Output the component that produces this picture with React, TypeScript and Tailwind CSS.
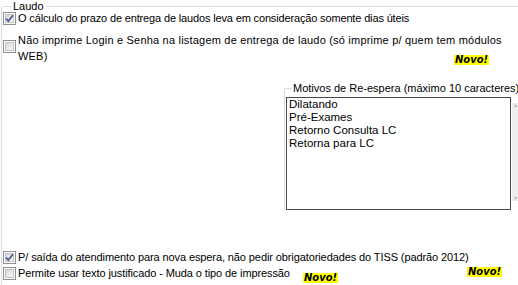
import React from "react";

function Check({ checked }: { checked?: boolean }) {
  return (
    <svg width="13" height="13" viewBox="0 0 13 13" className="shrink-0">
      <defs>
        <linearGradient id="cbg" x1="0" y1="0" x2="1" y2="1">
          <stop offset="0" stopColor="#d6d6d6" />
          <stop offset="1" stopColor="#fbfbfb" />
        </linearGradient>
      </defs>
      <rect x="0.5" y="0.5" width="12" height="12" fill="#fff" stroke="#8f8f8f" />
      <rect x="2.5" y="2.5" width="8" height="8" fill="url(#cbg)" stroke="#c4c4c4" />
      {checked && (
        <path d="M3 6.5 L5.3 9 L10 3.2" fill="none" stroke="#4a5f97" strokeWidth="1.8" />
      )}
    </svg>
  );
}

function Novo() {
  return (
    <span className="block h-[10px] w-[35px] bg-[#ffff00] text-center text-[10px] font-bold italic leading-[10px] text-black [font-family:'DejaVu_Sans',sans-serif]">
      Novo!
    </span>
  );
}

export default function App() {
  return (
    <div className="relative h-[285px] w-[518px] overflow-hidden bg-white text-[11px] leading-[13px] text-black [font-family:'Liberation_Sans',Arial,sans-serif]">
      <fieldset className="ml-[1px] h-[300px] w-[517px] rounded-[2px] border border-[#d5dfe5] px-[1px] pt-0">
        <legend className="ml-[8px] px-[2px] text-[11px] leading-[12px]">Laudo</legend>

        <label className="flex items-center gap-[2px] whitespace-nowrap">
          <Check checked />
          <span className="tracking-[-0.15px]">O cálculo do prazo de entrega de laudos leva em consideração somente dias úteis</span>
        </label>

        <div className="relative mt-[7px] flex items-start gap-[2px]">
          <div className="pt-[8px]">
            <Check />
          </div>
          <div className="whitespace-nowrap text-[11px] leading-[16px] tracking-[0.2px]">
            Não imprime Login e Senha na listagem de entrega de laudo (só imprime p/ quem tem módulos
            <br />
            WEB)
          </div>
          <span className="absolute left-[451px] top-[23px]">
            <Novo />
          </span>
        </div>

        <fieldset className="ml-[281px] mt-[18px] w-[240px] rounded-tl-[2px] border border-r-0 border-b-0 border-[#d5dfe5] pl-[1px] pr-0 pb-0">
          <legend className="ml-[6px] whitespace-nowrap px-[1px] text-[11px] leading-[13px]">
            Motivos de Re-espera (máximo 10 caracteres)
          </legend>
          <div className="mt-[2px] flex">
            <div className="h-[113px] w-[225px] border border-[#4a4a4a] px-[2px] text-[11.5px] leading-[13px]">
              <div>Dilatando</div>
              <div>Pré-Exames</div>
              <div>Retorno Consulta LC</div>
              <div>Retorna para LC</div>
            </div>
            <div className="ml-[1px] mt-[6px] flex h-[98px] w-[7px] flex-col items-center justify-between bg-[#eeeeee] py-[1px]">
              <svg width="3" height="3" viewBox="0 0 3 3">
                <path d="M0 3 L1.5 0 L3 3Z" fill="#b5b5b5" />
              </svg>
              <svg width="3" height="3" viewBox="0 0 3 3">
                <path d="M0 0 L1.5 3 L3 0Z" fill="#b5b5b5" />
              </svg>
            </div>
          </div>
        </fieldset>

        <div className="mt-[41px] flex items-center gap-[2px] whitespace-nowrap">
          <Check checked />
          <span className="tracking-[-0.1px]">P/ saída do atendimento para nova espera, não pedir obrigatoriedades do TISS (padrão 2012)</span>
        </div>
        <div className="relative mt-[3px] flex items-center gap-[2px] whitespace-nowrap">
          <Check />
          <span className="tracking-[-0.1px]">Permite usar texto justificado - Muda o tipo de impressão</span>
          <span className="absolute left-[300px] top-[6px]">
            <Novo />
          </span>
          <span className="absolute left-[464px] top-0">
            <Novo />
          </span>
        </div>
      </fieldset>
    </div>
  );
}
